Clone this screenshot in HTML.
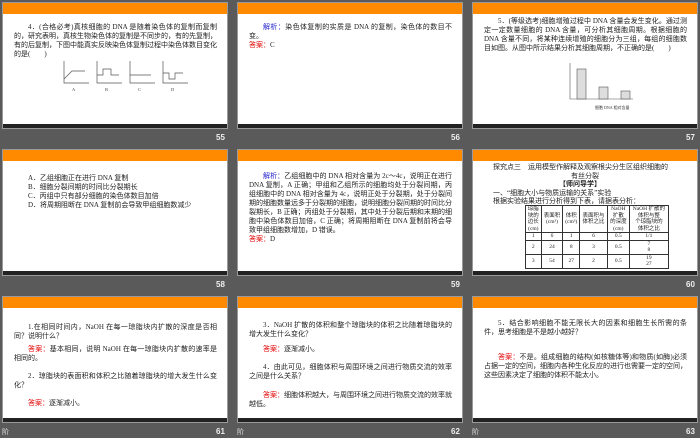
<!DOCTYPE html>
<html><head><meta charset="utf-8"><style>
*{margin:0;padding:0;box-sizing:border-box}
body{width:700px;height:438px;background:#5a5a5a;position:relative;overflow:hidden;font-family:"Liberation Serif","Noto Sans CJK SC",sans-serif;color:#222}
.s{position:absolute;width:226px;height:127px;background:#fff;border:1px solid #9a9a9a;overflow:hidden}
.s .o{position:absolute;left:0;top:0;right:0;height:11px;background:#ff8a00}
.s .b{position:absolute;left:0;bottom:0;right:0;height:4px;background:#222}
.t{position:absolute;left:11px;right:10px;font-size:7px;line-height:9px;text-align:justify}
.n{position:absolute;font:bold 8px "Liberation Sans",sans-serif;color:#eee}
.r{color:#e00000}.bl{color:#2222cc}
.in{text-indent:14px}
.x{position:absolute;font:7px "Noto Sans CJK SC",sans-serif;color:#ddd}
table{border-collapse:collapse;font-size:5.5px;line-height:6.5px;text-align:center}
td{border:1px solid #333;padding:0 1px}
.dr td{height:11px}
</style></head><body>

<!-- 55 -->
<div class="s" style="left:2px;top:2px">
<div class="o"></div>
<div class="t in" style="top:20px">4．(合格必考)真核细胞的 DNA 是随着染色体的复制而复制的，研究表明，真核生物染色体的复制是不同步的，有的先复制，有的后复制，下图中能真实反映染色体复制过程中染色体数目变化的是(　　)</div>
<svg style="position:absolute;left:55px;top:56px" width="140" height="36" viewBox="0 0 140 36" fill="none" stroke="#555" stroke-width="0.7">
<path d="M6 2V24H31M6 20L14 12H27"/><path d="M39 2V24H64M39 16H45V10H53V16H61"/><path d="M72 2V24H97M72 16H93"/><path d="M105 2V24H130M105 14H111V20H117V14H125"/>
<g fill="#444" stroke="none" font-size="4.5" font-family="Liberation Serif"><text x="14" y="32">A</text><text x="47" y="32">B</text><text x="80" y="32">C</text><text x="113" y="32">D</text></g></svg>
<div class="b"></div></div>
<div class="n" style="left:216px;top:133px">55</div>

<!-- 56 -->
<div class="s" style="left:237px;top:2px">
<div class="o"></div>
<div class="t in" style="top:20px"><span class="bl">解析：</span>染色体复制的实质是 DNA 的复制，染色体的数目不变。<br><span class="r">答案：</span>C</div>
<div class="b"></div></div>
<div class="n" style="left:451px;top:133px">56</div>

<!-- 57 -->
<div class="s" style="left:472px;top:2px">
<div class="o"></div>
<div class="t in" style="top:14px">5．(等级选考)细胞增殖过程中 DNA 含量会发生变化。通过测定一定数量细胞的 DNA 含量，可分析其细胞周期。根据细胞的 DNA 含量不同，将某种连续增殖的细胞分为三组，每组的细胞数目如图。从图中所示结果分析其细胞周期，不正确的是(　　)</div>
<svg style="position:absolute;left:90px;top:58px" width="80" height="52" viewBox="0 0 80 52" fill="#ddd" stroke="#555" stroke-width="0.6">
<path d="M7 2V38H70" fill="none"/><rect x="14" y="8" width="9" height="30"/><rect x="36" y="26" width="9" height="12"/><rect x="58" y="30" width="9" height="8"/>
<text x="32" y="48" font-size="4" fill="#333" stroke="none">细胞 DNA 相对含量</text></svg>
<div class="b"></div></div>
<div class="n" style="left:686px;top:133px">57</div>

<!-- 58 -->
<div class="s" style="left:2px;top:149px">
<div class="o"></div>
<div class="t" style="top:24px;left:25px">A．乙组细胞正在进行 DNA 复制<br>B．细胞分裂间期的时间比分裂期长<br>C．丙组中只有部分细胞的染色体数目加倍<br>D．将周期阻断在 DNA 复制前会导致甲组细胞数减少</div>
<div class="b"></div></div>
<div class="n" style="left:216px;top:280px">58</div>

<!-- 59 -->
<div class="s" style="left:237px;top:149px">
<div class="o"></div>
<div class="t in" style="top:22px"><span class="bl">解析：</span>乙组细胞中的 DNA 相对含量为 2c～4c，说明正在进行 DNA 复制，A 正确；甲组和乙组所示的细胞均处于分裂间期，丙组细胞中的 DNA 相对含量为 4c，说明正处于分裂期，处于分裂间期的细胞数量远多于分裂期的细胞，说明细胞分裂间期的时间比分裂期长，B 正确；丙组处于分裂期，其中处于分裂后期和末期的细胞中染色体数目加倍，C 正确；将周期阻断在 DNA 复制前将会导致甲组细胞数增加，D 错误。<br><span class="r">答案：</span>D</div>
<div class="b"></div></div>
<div class="n" style="left:451px;top:280px">59</div>

<!-- 60 -->
<div class="s" style="left:472px;top:149px">
<div class="o"></div>
<div class="t" style="top:13px;left:20px;line-height:8.5px">探究点三　运用模型作解释及观察根尖分生区组织细胞的<br><span style="padding-left:78px">有丝分裂</span><br><b style="padding-left:66px">【师问导学】</b><br>一、“细胞大小与物质运输的关系”实验<br>根据实验结果进行分析得到下表，请据表分析：</div>
<table style="position:absolute;left:52px;top:55px;width:144px">
<tr><td>琼脂<br>块的<br>边长<br>(cm)</td><td>表面积<br>(cm²)</td><td>体积<br>(cm³)</td><td>表面积与<br>体积之比</td><td>NaOH<br>扩散<br>的深度<br>(cm)</td><td>NaOH 扩散的<br>体积与整<br>个琼脂块的<br>体积之比</td></tr>
<tr><td style="height:6px">1</td><td>6</td><td>1</td><td>6</td><td>0.5</td><td>1/1</td></tr>
<tr class="dr"><td>2</td><td>24</td><td>8</td><td>3</td><td>0.5</td><td>7<br>8</td></tr>
<tr class="dr"><td>3</td><td>54</td><td>27</td><td>2</td><td>0.5</td><td>19<br>27</td></tr>
</table>
<div class="b"></div></div>
<div class="n" style="left:686px;top:280px">60</div>

<!-- 61 -->
<div class="s" style="left:2px;top:296px">
<div class="o"></div>
<div class="t in" style="top:26px">1.在相同时间内，NaOH 在每一琼脂块内扩散的深度是否相同？说明什么？</div>
<div class="t in" style="top:48px"><span class="r">答案：</span>基本相同，说明 NaOH 在每一琼脂块内扩散的速率是相同的。</div>
<div class="t in" style="top:75px">2．琼脂块的表面积和体积之比随着琼脂块的增大发生什么变化？</div>
<div class="t in" style="top:102px"><span class="r">答案：</span>逐渐减小。</div>
<div class="b"></div></div>
<div class="x" style="left:2px;top:427px">阶</div>
<div class="n" style="left:216px;top:427px">61</div>

<!-- 62 -->
<div class="s" style="left:237px;top:296px">
<div class="o"></div>
<div class="t in" style="top:24px">3．NaOH 扩散的体积和整个琼脂块的体积之比随着琼脂块的增大发生什么变化？</div>
<div class="t in" style="top:48px"><span class="r">答案：</span>逐渐减小。</div>
<div class="t in" style="top:66px">4．由此可见，细胞体积与周围环境之间进行物质交流的效率之间是什么关系？</div>
<div class="t in" style="top:94px"><span class="r">答案：</span>细胞体积越大，与周围环境之间进行物质交流的效率就越低。</div>
<div class="b"></div></div>
<div class="x" style="left:237px;top:427px">阶</div>
<div class="n" style="left:451px;top:427px">62</div>

<!-- 63 -->
<div class="s" style="left:472px;top:296px">
<div class="o"></div>
<div class="t in" style="top:22px">5．结合影响细胞不能无限长大的因素和细胞生长所需的条件，思考细胞是不是越小越好？</div>
<div class="t in" style="top:56px"><span class="r">答案：</span>不是。组成细胞的结构(如核糖体等)和物质(如酶)必须占据一定的空间，细胞内各种生化反应的进行也需要一定的空间，这些因素决定了细胞的体积不能太小。</div>
<div class="b"></div></div>
<div class="x" style="left:472px;top:427px">阶</div>
<div class="n" style="left:686px;top:427px">63</div>

</body></html>
